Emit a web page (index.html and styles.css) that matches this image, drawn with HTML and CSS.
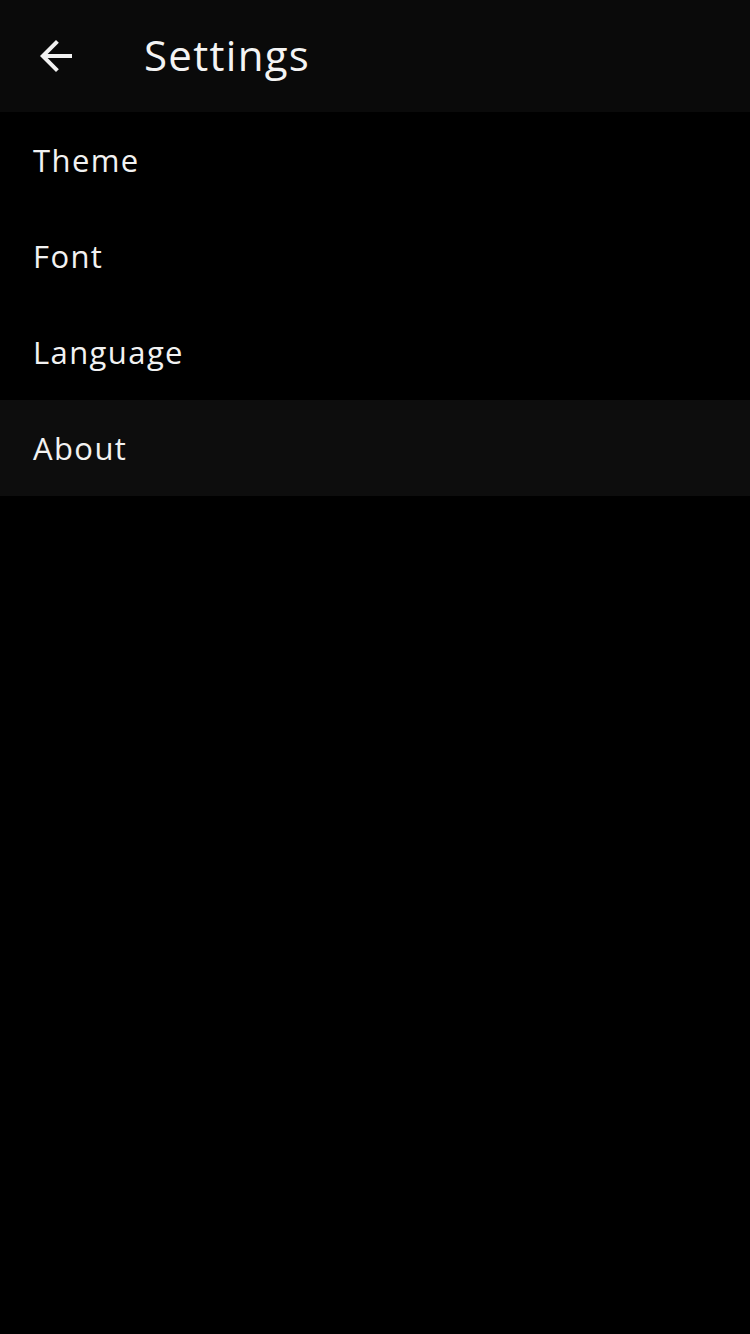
FILE: index.html
```html
<!DOCTYPE html>
<html>
<head>
<meta charset="utf-8">
<link rel="stylesheet" href="styles.css">
</head>
<body>
<div class="app">
  <header class="topbar">
    <button class="back" aria-label="Back">
      <svg viewBox="0 0 24 24" width="48" height="48"><path fill="#f2f2f2" d="M20 11H7.83l5.59-5.59L12 4l-8 8 8 8 1.41-1.41L7.83 13H20v-2z"/></svg>
    </button>
    <h1 class="title">Settings</h1>
  </header>
  <ul class="menu">
    <li class="item">Theme</li>
    <li class="item">Font</li>
    <li class="item">Language</li>
    <li class="item active">About</li>
  </ul>
</div>
</body>
</html>
```
FILE: styles.css
```css
html, body {
  margin: 0;
  padding: 0;
  background: #000;
}
body {
  font-family: "Open Sans", "Noto Sans", sans-serif;
  color: #f2f2f2;
}
.app {
  width: 750px;
  min-height: 1334px;
  background: #000;
}
.topbar {
  height: 112px;
  background: #0a0a0a;
  display: flex;
  align-items: center;
  padding-left: 32px;
  box-sizing: border-box;
}
.back {
  width: 48px;
  height: 48px;
  padding: 0;
  border: 0;
  background: none;
  display: flex;
}
.title {
  margin: 0 0 4px 64px;
  font-size: 42px;
  font-weight: 400;
  color: #f4f4f4;
  letter-spacing: 1.3px;
}
.menu {
  list-style: none;
  margin: 0;
  padding: 0;
}
.item {
  height: 96px;
  display: flex;
  align-items: center;
  padding-left: 33px;
  font-size: 31px;
  letter-spacing: 1.4px;
  color: #f2f2f2;
}
.item.active {
  background: #0d0d0d;
}
```
